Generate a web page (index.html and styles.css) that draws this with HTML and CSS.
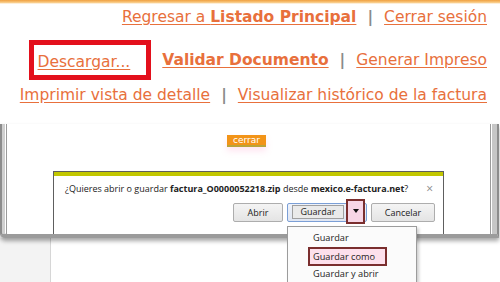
FILE: index.html
```html
<!DOCTYPE html>
<html lang="es">
<head>
<meta charset="utf-8">
<link rel="stylesheet" href="styles.css">
</head>
<body>
<div class="topbar"></div>
<nav class="nav">
  <div class="row row1">
    <a href="#" class="lnk">Regresar a <b>Listado Principal</b></a>
    <span class="sep">|</span>
    <a href="#" class="lnk">Cerrar sesión</a>
  </div>
  <div class="row row2">
    <span class="hl"><a href="#" class="lnk">Descargar...</a></span>
    <a href="#" class="lnk"><b>Validar Documento</b></a>
    <span class="sep">|</span>
    <a href="#" class="lnk">Generar Impreso</a>
  </div>
  <div class="row row3">
    <a href="#" class="lnk">Imprimir vista de detalle</a>
    <span class="sep">|</span>
    <a href="#" class="lnk">Visualizar histórico de la factura</a>
  </div>
</nav>
<div class="window">
  <div class="win-inner">
    <div class="cerrar-wrap"><span class="cerrar">cerrar</span></div>
    <div class="dialog">
      <div class="dlg-bar"></div>
      <div class="dlg-msg">
        <span>¿Quieres abrir o guardar <b>factura_O0000052218.zip</b> desde <b>mexico.e-factura.net</b>?</span>
        <span class="close">×</span>
      </div>
      <div class="dlg-btns">
        <span class="btn abrir">Abrir</span>
        <span class="split">
          <span class="split-main"><span class="focus">Guardar</span></span>
          <span class="split-arrow"><span class="tri"></span></span>
        </span>
        <span class="btn cancelar">Cancelar</span>
      </div>
    </div>
  </div>
</div>
<div class="below">
  <div class="side"></div>
  <div class="main"></div>
</div>
<div class="menu">
  <div class="item">Guardar</div>
  <div class="item sel">Guardar como</div>
  <div class="item">Guardar y abrir</div>
</div>
</body>
</html>
```

FILE: styles.css
```css
html, body { margin: 0; padding: 0; }
body {
  width: 500px;
  height: 282px;
  overflow: hidden;
  background: #fff;
  position: relative;
  font-family: "DejaVu Sans", Verdana, sans-serif;
}
.topbar {
  height: 4px;
  background: linear-gradient(#f0a040, #f8c880 60%, #fff);
}
.nav {
  display: flex;
  flex-direction: column;
  align-items: flex-end;
  padding-right: 13px;
  font-size: 15.5px;
}
.row { display: flex; align-items: center; white-space: nowrap; }
.row1 { height: 20px; margin-top: 3px; }
.row2 { height: 40px; margin-top: 13px; }
.row3 { height: 20px; margin-top: 5px; }
.lnk {
  color: #e8703c;
  text-decoration: underline;
  text-underline-offset: 2px;
}
.lnk b { font-weight: bold; }
.sep {
  color: #8a8a8a;
  font-weight: bold;
  margin: 0 11px;
}
.hl {
  display: flex;
  align-items: center;
  box-sizing: border-box;
  height: 40px;
  border: 5px solid #e3101c;
  padding: 3px 16px 0 4px;
  margin-right: 11px;
}
.window {
  margin-top: 19px;
  height: 114px;
  box-sizing: border-box;
  margin-right: 1px;
  border-left: 2px solid #8c8c8c;
  border-right: 2px solid #8c8c8c;
  border-bottom: 4px solid #9b9b9b;
  border-bottom-left-radius: 5px;
  box-shadow: inset 3px 0 #cfcfcf, inset -5px 0 #c6c6c6, 0 3px 4px rgba(0,0,0,0.35);
  background: #fff;
  position: relative;
  z-index: 1;
}
.win-inner {
  margin-left: 4px;
  margin-right: 6px;
  height: 100%;
  border-left: 1px solid #9a9a9a;
  border-right: 1px solid #9a9a9a;
  display: flex;
  flex-direction: column;
}
.cerrar-wrap {
  display: flex;
  justify-content: center;
  padding-top: 11px;
  padding-right: 4px;
  height: 26px;
  box-sizing: border-box;
}
.cerrar {
  display: inline-block;
  width: 39px;
  height: 12px;
  box-sizing: border-box;
  background: #f29418;
  border-bottom: 2px solid #b9a43a;
  color: #fff;
  font-family: "DejaVu Sans", sans-serif;
  font-size: 9px;
  line-height: 10px;
  text-align: center;
  box-shadow: 0 4px 6px rgba(255,150,200,0.25);
}
.dialog {
  margin-top: 21px;
  margin-left: 46px;
  width: 391px;
  flex: 1;
  box-sizing: border-box;
  border: 1px solid #5e5e5e;
  border-bottom: none;
  background: #fff;
  font-family: "Open Sans", "Noto Sans", sans-serif;
  font-size: 9px;
  color: #222;
  display: flex;
  flex-direction: column;
}
.dlg-bar { height: 4px; background: #c2c700; }
.dlg-msg {
  display: flex;
  justify-content: space-between;
  align-items: center;
  padding: 0 10px 0 11px;
  height: 25px;
  white-space: nowrap;
}
.dlg-msg b { font-weight: 700; }
.close { color: #888; font-size: 12px; }
.dlg-btns {
  display: flex;
  justify-content: flex-end;
  align-items: center;
  padding-right: 8px;
  gap: 4px;
  height: 22px;
}
.btn {
  display: flex;
  align-items: center;
  justify-content: center;
  height: 19px;
  box-sizing: border-box;
  border: 1px solid #adadad;
  border-radius: 2px;
  background: linear-gradient(#f4f4f4, #e4e4e4);
  color: #222;
}
.abrir { width: 50px; }
.cancelar { width: 64px; }
.split {
  display: flex;
  align-items: center;
  height: 19px;
  box-sizing: border-box;
  border: 1px solid #7b9fd6;
  border-radius: 2px;
  background: linear-gradient(#eef2fa, #e0e6f2);
  position: relative;
  width: 80px;
}
.split-main {
  width: 60px;
  display: flex;
  justify-content: center;
}
.focus {
  display: inline-block;
  width: 52px;
  text-align: center;
  border: 1px solid #a0a0a0;
  background: #eaeaea;
  line-height: 12px;
  height: 14px;
  box-sizing: border-box;
}
.split-arrow {
  position: absolute;
  left: 58px;
  top: -5px;
  width: 19px;
  height: 25px;
  box-sizing: border-box;
  border: 2px solid #7a2e2e;
  background: #f7d6e6;
  display: flex;
  align-items: center;
  justify-content: center;
}
.tri {
  width: 0; height: 0;
  border-left: 3px solid transparent;
  border-right: 3px solid transparent;
  border-top: 4px solid #111;
}
.below {
  display: flex;
  height: 44px;
}
.side {
  width: 50px;
  background: #f3f3f3;
  border-right: 1px solid #d6d6d6;
}
.main { flex: 1; background: #fff; }
.menu {
  position: absolute;
  left: 287px;
  top: 226px;
  width: 130px;
  height: 56px;
  box-sizing: border-box;
  border: 1px solid #9c9c9c;
  border-bottom: none;
  background: #fbfbfb;
  box-shadow: 2px 2px 3px rgba(0,0,0,0.2);
  z-index: 5;
  font-family: "Open Sans", "Noto Sans", sans-serif;
  font-size: 9.2px;
  color: #222;
  padding: 3px 0 0 20px;
}
.item {
  height: 16px;
  line-height: 16px;
  padding-left: 5px;
  white-space: nowrap;
}
.item.sel {
  display: inline-block;
  height: 19px;
  line-height: 15px;
  box-sizing: border-box;
  border: 2px solid #7a2e2e;
  background: #fde0ec;
  padding: 0 10px 0 3px;
  margin: 1px 0 0 0;
}
```
